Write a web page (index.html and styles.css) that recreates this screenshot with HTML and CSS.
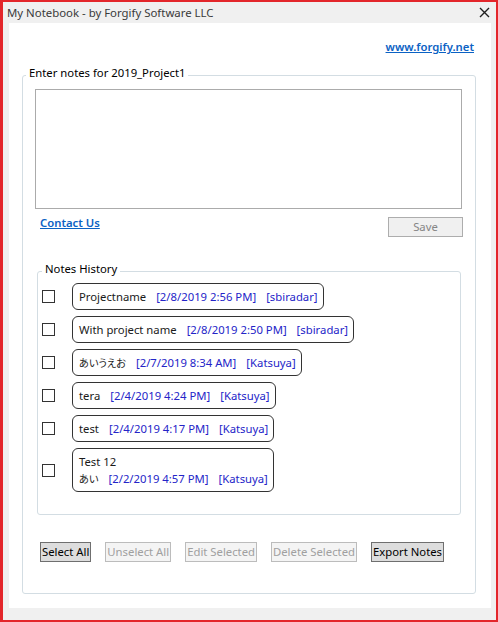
FILE: index.html
```html
<!DOCTYPE html>
<html lang="en">
<head>
    <meta charset="UTF-8">
    <meta name="viewport" content="width=device-width, initial-scale=1.0">
    <title>My Notebook - by Forgify Software LLC</title>
    <link rel="stylesheet" href="styles.css">
</head>
<body>
    <div class="window">
        <div class="titlebar">
            <span class="title">My Notebook - by Forgify Software LLC</span>
            <svg class="close" width="11" height="11" viewBox="0 0 11 11">
                <path d="M1 1 L10 10 M10 1 L1 10" stroke="#1f1f1f" stroke-width="1.4" fill="none"/>
            </svg>
        </div>
        <div class="frame">
            <div class="panel">
                <div class="site-row">
                    <a class="link" href="#">www.forgify.net</a>
                </div>

                <fieldset class="group notes-group">
                    <legend>Enter notes for 2019_Project1</legend>
                    <textarea class="note-input"></textarea>

                    <div class="action-row">
                        <a class="link" href="#">Contact Us</a>
                        <button class="btn save-btn" disabled>Save</button>
                    </div>

                    <fieldset class="group history">
                        <legend>Notes History</legend>
                        <ul class="history-list">
                            <li class="note-row">
                                <span class="check"></span>
                                <div class="pill">Projectname<span class="meta">[2/8/2019 2:56 PM]</span><span class="meta">[sbiradar]</span></div>
                            </li>
                            <li class="note-row">
                                <span class="check"></span>
                                <div class="pill">With project name<span class="meta">[2/8/2019 2:50 PM]</span><span class="meta">[sbiradar]</span></div>
                            </li>
                            <li class="note-row">
                                <span class="check"></span>
                                <div class="pill"><span class="jp">あいうえお</span><span class="meta">[2/7/2019 8:34 AM]</span><span class="meta">[Katsuya]</span></div>
                            </li>
                            <li class="note-row">
                                <span class="check"></span>
                                <div class="pill">tera<span class="meta">[2/4/2019 4:24 PM]</span><span class="meta">[Katsuya]</span></div>
                            </li>
                            <li class="note-row">
                                <span class="check"></span>
                                <div class="pill">test<span class="meta">[2/4/2019 4:17 PM]</span><span class="meta">[Katsuya]</span></div>
                            </li>
                            <li class="note-row">
                                <span class="check"></span>
                                <div class="pill">Test 12<br><span class="jp">あい</span><span class="meta">[2/2/2019 4:57 PM]</span><span class="meta">[Katsuya]</span></div>
                            </li>
                        </ul>
                    </fieldset>

                    <div class="btn-row">
                        <button class="btn btn-active">Select All</button>
                        <button class="btn" disabled>Unselect All</button>
                        <button class="btn" disabled>Edit Selected</button>
                        <button class="btn" disabled>Delete Selected</button>
                        <button class="btn btn-active">Export Notes</button>
                    </div>
                </fieldset>
            </div>
        </div>
    </div>
</body>
</html>
```

FILE: styles.css
```css
* {
    box-sizing: border-box;
}
body {
    margin: 0;
    font-family: "Noto Sans", "Noto Sans CJK JP", sans-serif;
    font-size: 11.3px;
    color: #1a1a1a;
    background: #f0f0f0;
}
.window {
    width: 498px;
    height: 622px;
    border: 2px solid #e3262b;
    border-left-width: 3px;
    background: #f0f0f0;
    display: flex;
    flex-direction: column;
}
.titlebar {
    height: 21px;
    display: flex;
    align-items: center;
    justify-content: space-between;
    padding: 0 6px 0 4px;
}
.title {
    font-size: 11.4px;
    color: #3a3a3a;
}
.frame {
    flex: 1;
    padding: 0 5px 12px 6px;
    display: flex;
}
.panel {
    flex: 1;
    background: #fff;
    padding: 0 15px 0 13px;
}
.site-row {
    display: flex;
    justify-content: flex-end;
    padding: 16px 2px 0 0;
    height: 42px;
}
.link {
    color: #0b62c4;
    font-weight: 600;
    text-decoration: underline;
    line-height: 16px;
}

/* group boxes */
.group {
    margin: 0;
    border: 1px solid #d3dde3;
    border-radius: 3px;
    padding: 0;
}
.group legend {
    margin-left: 3px;
    padding: 0 3px 4px;
    color: #000;
    line-height: 16px;
}
.notes-group {
    height: 529px;
    padding: 0 12px;
}
.notes-group > legend {
    margin-left: -9px;
}
.note-input {
    display: block;
    width: 427px;
    height: 120px;
    margin-top: 4px;
    border: 1px solid #ababab;
    resize: none;
    font: inherit;
}
.action-row {
    display: flex;
    justify-content: space-between;
    align-items: flex-start;
    padding: 6px 0 0 5px;
    height: 52px;
}
.btn {
    font: inherit;
    flex: none;
    white-space: nowrap;
    height: 20px;
    padding: 0 1px;
    background: #f4f4f4;
    border: 1px solid #bcbcbc;
    color: #a0a0a0;
    line-height: 18px;
}
.save-btn {
    width: 75px;
    margin-top: 2px;
    background: #f0f0f0;
    border-color: #adadad;
    color: #858585;
}
.btn-active {
    background: #dddddd;
    border-color: #6f6f6f;
    color: #000;
}

/* notes history */
.history {
    margin: 0 2px;
    height: 254px;
    padding: 0 4px;
}
.history > legend {
    margin-left: 0;
}
.history-list {
    list-style: none;
    margin: 0;
    padding: 2px 0 0;
    display: flex;
    flex-direction: column;
    gap: 6px;
}
.note-row {
    display: flex;
    align-items: center;
    gap: 17px;
}
.check {
    width: 13px;
    height: 13px;
    border: 1px solid #333;
    background: #fff;
    flex-shrink: 0;
}
.pill {
    border: 1px solid #333;
    border-radius: 6px;
    padding: 4px 5px 4px 6px;
    line-height: 17px;
    color: #1a1a1a;
}
.jp {
    font-size: 10.2px;
    line-height: 10px;
    font-feature-settings: "palt";
}
.meta {
    color: #2424c8;
    margin-left: 10px;
}

.btn-row {
    display: flex;
    gap: 14px;
    padding: 27px 0 0 5px;
}
```
